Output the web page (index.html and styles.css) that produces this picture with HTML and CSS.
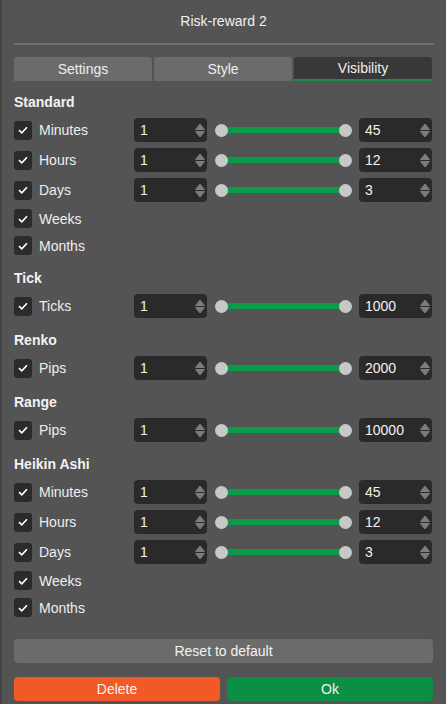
FILE: index.html
```html
<!DOCTYPE html>
<html>
<head>
<meta charset="utf-8">
<link rel="stylesheet" href="styles.css">
</head>
<body>
<div class="dialog">
  <div class="title">Risk-reward 2</div>
  <div class="sep"></div>
  <div class="tabs">
    <div class="tab">Settings</div>
    <div class="tab">Style</div>
    <div class="tab active">Visibility</div>
  </div>

  <div class="section">
    <div class="sec-title">Standard</div>
    <div class="rows">
      <div class="row">
        <div class="check"><span class="box"><svg viewBox="0 0 10 8" width="10" height="8"><path d="M1 4.2 L3.8 6.8 L9 1.2" fill="none" stroke="#fff" stroke-width="1.6"/></svg></span><span class="label">Minutes</span></div>
        <div class="num"><span>1</span><svg class="spin" viewBox="0 0 10 15" width="10" height="15"><path d="M5 1 L9.5 6.5 L0.5 6.5 Z M0.5 8.5 L9.5 8.5 L5 14 Z" fill="#7c7c7c" stroke="#7c7c7c" stroke-linejoin="round" stroke-width="1"/></svg></div>
        <div class="slider"><div class="track"></div><span class="knob"></span><span class="knob"></span></div>
        <div class="num"><span>45</span><svg class="spin" viewBox="0 0 10 15" width="10" height="15"><path d="M5 1 L9.5 6.5 L0.5 6.5 Z M0.5 8.5 L9.5 8.5 L5 14 Z" fill="#7c7c7c" stroke="#7c7c7c" stroke-linejoin="round" stroke-width="1"/></svg></div>
      </div>
      <div class="row">
        <div class="check"><span class="box"><svg viewBox="0 0 10 8" width="10" height="8"><path d="M1 4.2 L3.8 6.8 L9 1.2" fill="none" stroke="#fff" stroke-width="1.6"/></svg></span><span class="label">Hours</span></div>
        <div class="num"><span>1</span><svg class="spin" viewBox="0 0 10 15" width="10" height="15"><path d="M5 1 L9.5 6.5 L0.5 6.5 Z M0.5 8.5 L9.5 8.5 L5 14 Z" fill="#7c7c7c" stroke="#7c7c7c" stroke-linejoin="round" stroke-width="1"/></svg></div>
        <div class="slider"><div class="track"></div><span class="knob"></span><span class="knob"></span></div>
        <div class="num"><span>12</span><svg class="spin" viewBox="0 0 10 15" width="10" height="15"><path d="M5 1 L9.5 6.5 L0.5 6.5 Z M0.5 8.5 L9.5 8.5 L5 14 Z" fill="#7c7c7c" stroke="#7c7c7c" stroke-linejoin="round" stroke-width="1"/></svg></div>
      </div>
      <div class="row">
        <div class="check"><span class="box"><svg viewBox="0 0 10 8" width="10" height="8"><path d="M1 4.2 L3.8 6.8 L9 1.2" fill="none" stroke="#fff" stroke-width="1.6"/></svg></span><span class="label">Days</span></div>
        <div class="num"><span>1</span><svg class="spin" viewBox="0 0 10 15" width="10" height="15"><path d="M5 1 L9.5 6.5 L0.5 6.5 Z M0.5 8.5 L9.5 8.5 L5 14 Z" fill="#7c7c7c" stroke="#7c7c7c" stroke-linejoin="round" stroke-width="1"/></svg></div>
        <div class="slider"><div class="track"></div><span class="knob"></span><span class="knob"></span></div>
        <div class="num"><span>3</span><svg class="spin" viewBox="0 0 10 15" width="10" height="15"><path d="M5 1 L9.5 6.5 L0.5 6.5 Z M0.5 8.5 L9.5 8.5 L5 14 Z" fill="#7c7c7c" stroke="#7c7c7c" stroke-linejoin="round" stroke-width="1"/></svg></div>
      </div>
      <div class="row short">
        <div class="check"><span class="box"><svg viewBox="0 0 10 8" width="10" height="8"><path d="M1 4.2 L3.8 6.8 L9 1.2" fill="none" stroke="#fff" stroke-width="1.6"/></svg></span><span class="label">Weeks</span></div>
      </div>
      <div class="row short">
        <div class="check"><span class="box"><svg viewBox="0 0 10 8" width="10" height="8"><path d="M1 4.2 L3.8 6.8 L9 1.2" fill="none" stroke="#fff" stroke-width="1.6"/></svg></span><span class="label">Months</span></div>
      </div>
    </div>
  </div>

  <div class="section">
    <div class="sec-title">Tick</div>
    <div class="rows">
      <div class="row">
        <div class="check"><span class="box"><svg viewBox="0 0 10 8" width="10" height="8"><path d="M1 4.2 L3.8 6.8 L9 1.2" fill="none" stroke="#fff" stroke-width="1.6"/></svg></span><span class="label">Ticks</span></div>
        <div class="num"><span>1</span><svg class="spin" viewBox="0 0 10 15" width="10" height="15"><path d="M5 1 L9.5 6.5 L0.5 6.5 Z M0.5 8.5 L9.5 8.5 L5 14 Z" fill="#7c7c7c" stroke="#7c7c7c" stroke-linejoin="round" stroke-width="1"/></svg></div>
        <div class="slider"><div class="track"></div><span class="knob"></span><span class="knob"></span></div>
        <div class="num"><span>1000</span><svg class="spin" viewBox="0 0 10 15" width="10" height="15"><path d="M5 1 L9.5 6.5 L0.5 6.5 Z M0.5 8.5 L9.5 8.5 L5 14 Z" fill="#7c7c7c" stroke="#7c7c7c" stroke-linejoin="round" stroke-width="1"/></svg></div>
      </div>
    </div>
  </div>

  <div class="section">
    <div class="sec-title">Renko</div>
    <div class="rows">
      <div class="row">
        <div class="check"><span class="box"><svg viewBox="0 0 10 8" width="10" height="8"><path d="M1 4.2 L3.8 6.8 L9 1.2" fill="none" stroke="#fff" stroke-width="1.6"/></svg></span><span class="label">Pips</span></div>
        <div class="num"><span>1</span><svg class="spin" viewBox="0 0 10 15" width="10" height="15"><path d="M5 1 L9.5 6.5 L0.5 6.5 Z M0.5 8.5 L9.5 8.5 L5 14 Z" fill="#7c7c7c" stroke="#7c7c7c" stroke-linejoin="round" stroke-width="1"/></svg></div>
        <div class="slider"><div class="track"></div><span class="knob"></span><span class="knob"></span></div>
        <div class="num"><span>2000</span><svg class="spin" viewBox="0 0 10 15" width="10" height="15"><path d="M5 1 L9.5 6.5 L0.5 6.5 Z M0.5 8.5 L9.5 8.5 L5 14 Z" fill="#7c7c7c" stroke="#7c7c7c" stroke-linejoin="round" stroke-width="1"/></svg></div>
      </div>
    </div>
  </div>

  <div class="section">
    <div class="sec-title">Range</div>
    <div class="rows">
      <div class="row">
        <div class="check"><span class="box"><svg viewBox="0 0 10 8" width="10" height="8"><path d="M1 4.2 L3.8 6.8 L9 1.2" fill="none" stroke="#fff" stroke-width="1.6"/></svg></span><span class="label">Pips</span></div>
        <div class="num"><span>1</span><svg class="spin" viewBox="0 0 10 15" width="10" height="15"><path d="M5 1 L9.5 6.5 L0.5 6.5 Z M0.5 8.5 L9.5 8.5 L5 14 Z" fill="#7c7c7c" stroke="#7c7c7c" stroke-linejoin="round" stroke-width="1"/></svg></div>
        <div class="slider"><div class="track"></div><span class="knob"></span><span class="knob"></span></div>
        <div class="num"><span>10000</span><svg class="spin" viewBox="0 0 10 15" width="10" height="15"><path d="M5 1 L9.5 6.5 L0.5 6.5 Z M0.5 8.5 L9.5 8.5 L5 14 Z" fill="#7c7c7c" stroke="#7c7c7c" stroke-linejoin="round" stroke-width="1"/></svg></div>
      </div>
    </div>
  </div>

  <div class="section">
    <div class="sec-title">Heikin Ashi</div>
    <div class="rows">
      <div class="row">
        <div class="check"><span class="box"><svg viewBox="0 0 10 8" width="10" height="8"><path d="M1 4.2 L3.8 6.8 L9 1.2" fill="none" stroke="#fff" stroke-width="1.6"/></svg></span><span class="label">Minutes</span></div>
        <div class="num"><span>1</span><svg class="spin" viewBox="0 0 10 15" width="10" height="15"><path d="M5 1 L9.5 6.5 L0.5 6.5 Z M0.5 8.5 L9.5 8.5 L5 14 Z" fill="#7c7c7c" stroke="#7c7c7c" stroke-linejoin="round" stroke-width="1"/></svg></div>
        <div class="slider"><div class="track"></div><span class="knob"></span><span class="knob"></span></div>
        <div class="num"><span>45</span><svg class="spin" viewBox="0 0 10 15" width="10" height="15"><path d="M5 1 L9.5 6.5 L0.5 6.5 Z M0.5 8.5 L9.5 8.5 L5 14 Z" fill="#7c7c7c" stroke="#7c7c7c" stroke-linejoin="round" stroke-width="1"/></svg></div>
      </div>
      <div class="row">
        <div class="check"><span class="box"><svg viewBox="0 0 10 8" width="10" height="8"><path d="M1 4.2 L3.8 6.8 L9 1.2" fill="none" stroke="#fff" stroke-width="1.6"/></svg></span><span class="label">Hours</span></div>
        <div class="num"><span>1</span><svg class="spin" viewBox="0 0 10 15" width="10" height="15"><path d="M5 1 L9.5 6.5 L0.5 6.5 Z M0.5 8.5 L9.5 8.5 L5 14 Z" fill="#7c7c7c" stroke="#7c7c7c" stroke-linejoin="round" stroke-width="1"/></svg></div>
        <div class="slider"><div class="track"></div><span class="knob"></span><span class="knob"></span></div>
        <div class="num"><span>12</span><svg class="spin" viewBox="0 0 10 15" width="10" height="15"><path d="M5 1 L9.5 6.5 L0.5 6.5 Z M0.5 8.5 L9.5 8.5 L5 14 Z" fill="#7c7c7c" stroke="#7c7c7c" stroke-linejoin="round" stroke-width="1"/></svg></div>
      </div>
      <div class="row">
        <div class="check"><span class="box"><svg viewBox="0 0 10 8" width="10" height="8"><path d="M1 4.2 L3.8 6.8 L9 1.2" fill="none" stroke="#fff" stroke-width="1.6"/></svg></span><span class="label">Days</span></div>
        <div class="num"><span>1</span><svg class="spin" viewBox="0 0 10 15" width="10" height="15"><path d="M5 1 L9.5 6.5 L0.5 6.5 Z M0.5 8.5 L9.5 8.5 L5 14 Z" fill="#7c7c7c" stroke="#7c7c7c" stroke-linejoin="round" stroke-width="1"/></svg></div>
        <div class="slider"><div class="track"></div><span class="knob"></span><span class="knob"></span></div>
        <div class="num"><span>3</span><svg class="spin" viewBox="0 0 10 15" width="10" height="15"><path d="M5 1 L9.5 6.5 L0.5 6.5 Z M0.5 8.5 L9.5 8.5 L5 14 Z" fill="#7c7c7c" stroke="#7c7c7c" stroke-linejoin="round" stroke-width="1"/></svg></div>
      </div>
      <div class="row short">
        <div class="check"><span class="box"><svg viewBox="0 0 10 8" width="10" height="8"><path d="M1 4.2 L3.8 6.8 L9 1.2" fill="none" stroke="#fff" stroke-width="1.6"/></svg></span><span class="label">Weeks</span></div>
      </div>
      <div class="row short">
        <div class="check"><span class="box"><svg viewBox="0 0 10 8" width="10" height="8"><path d="M1 4.2 L3.8 6.8 L9 1.2" fill="none" stroke="#fff" stroke-width="1.6"/></svg></span><span class="label">Months</span></div>
      </div>
    </div>
  </div>

  <div class="btn reset">Reset to default</div>
  <div class="actions">
    <div class="btn delete">Delete</div>
    <div class="btn ok">Ok</div>
  </div>
</div>
</body>
</html>
```

FILE: styles.css
```css
html, body {
  margin: 0;
  padding: 0;
  background: #545454;
}
body {
  font-family: "Liberation Sans", Arial, sans-serif;
  font-size: 14px;
  color: #ececec;
}
.dialog {
  width: 446px;
  height: 704px;
  box-sizing: border-box;
  padding: 0 13px 0 14px;
  box-shadow: inset 2px 0 0 #444;
  overflow: hidden;
}
.title {
  height: 43px;
  line-height: 43px;
  text-align: center;
  font-size: 14px;
  color: #f0f0f0;
}
.sep {
  height: 2px;
  background: #6e6e6e;
  margin-right: -1px;
}
.tabs {
  display: flex;
  gap: 2px;
  margin-top: 12px;
  width: 418px;
}
.tab {
  flex: 1;
  height: 24px;
  line-height: 24px;
  text-align: center;
  background: #6b6b6b;
  border-radius: 3px 3px 0 0;
  color: #eeeeee;
  box-sizing: border-box;
}
.tab.active {
  background: #383838;
  border-bottom: 2px solid #1d8d4f;
  line-height: 22px;
}
.section {
  margin-top: 14px;
  width: 418px;
}
.tabs + .section {
  margin-top: 13px;
}
.sec-title {
  font-weight: bold;
  line-height: 16px;
  height: 16px;
  color: #f2f2f2;
}
.rows {
  display: flex;
  flex-direction: column;
  gap: 6px;
  margin-top: 8px;
}
.row {
  display: grid;
  grid-template-columns: 120px 73px 1fr 73px;
  align-items: center;
  height: 24px;
}
.row.short {
  height: 21px;
}
.check {
  display: flex;
  align-items: center;
  gap: 7px;
}
.box {
  width: 18px;
  height: 19px;
  border-radius: 3px;
  background: #2b2b2b;
  display: flex;
  align-items: center;
  justify-content: center;
}
.label {
  color: #eeeeee;
}
.num {
  height: 24px;
  background: #2a2a2a;
  border-radius: 4px;
  display: flex;
  align-items: center;
  justify-content: space-between;
  padding: 0 2px 0 6px;
  color: #f2f2f2;
}
.spin {
  display: block;
}
.slider {
  position: relative;
  height: 24px;
  margin: 0 7px 0 7.5px;
  display: flex;
  align-items: center;
  justify-content: space-between;
}
.track {
  position: absolute;
  left: 6px;
  right: 6px;
  top: 9px;
  height: 6px;
  background: #0a9a4b;
}
.knob {
  position: relative;
  width: 13px;
  height: 13px;
  border-radius: 50%;
  background: #c8c8c8;
}
.btn {
  height: 24px;
  line-height: 24px;
  text-align: center;
  border-radius: 4px;
  color: #f4f4f4;
}
.reset {
  margin-top: 21px;
  background: #6b6b6b;
}
.actions {
  display: flex;
  gap: 7px;
  margin-top: 14px;
}
.actions .btn {
  flex: 1;
}
.delete {
  background: #f15a26;
}
.ok {
  background: #0b8f44;
}
```
